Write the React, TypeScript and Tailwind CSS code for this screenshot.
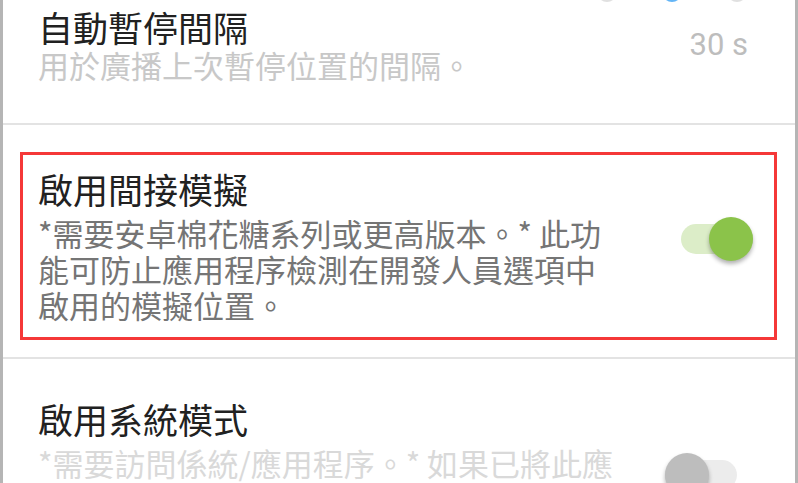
import React from "react";

const cjk = { fontFamily: '"Noto Sans CJK TC", "Noto Sans CJK SC", sans-serif' };
const latin = { fontFamily: 'Roboto, "Noto Sans CJK TC", sans-serif' };

function Toggle({ on }: { on: boolean }) {
  return (
    <div className="relative w-[72px] h-[44px] flex items-center">
      <div
        className={
          "w-[72px] h-[30px] rounded-full " + (on ? "bg-[#dcedc8]" : "bg-[#ececec]")
        }
      />
      <div
        className={
          "absolute top-0 w-[44px] h-[44px] rounded-full shadow-[0_3px_4px_rgba(0,0,0,0.3)] " +
          (on ? "right-0 bg-[#8bc34a]" : "left-0 bg-[#bdbdbd]")
        }
      />
    </div>
  );
}

function Divider() {
  return <div className="h-[2px] bg-[#e3e3e3]" />;
}

export default function App() {
  return (
    <div className="relative w-[798px] h-[483px] overflow-hidden bg-white border-x-[3px] border-[#b5b5b5]">
      {/* dots from the row above, cut off at the top edge */}
      <div className="absolute top-[-18px] left-[594px] w-[20px] h-[20px] rounded-full bg-[#e0e0e0]" />
      <div className="absolute top-[-18px] left-[659px] w-[20px] h-[20px] rounded-full bg-[#64b5f6]" />
      <div className="absolute top-[-18px] left-[724px] w-[20px] h-[20px] rounded-full bg-[#e0e0e0]" />

      <div className="flex items-center justify-between pl-[35px] pr-[47px] h-[123px] pb-[34px]">
        <div style={cjk}>
          <div className="text-[35px] leading-[40px] text-[#212121]">自動暫停間隔</div>
          <div className="text-[31px] leading-[36px] text-[#c8c8c8]">用於廣播上次暫停位置的間隔。</div>
        </div>
        <div style={latin} className="text-[31px] text-[#bdbdbd] mt-[2px]">
          30 s
        </div>
      </div>
      <Divider />

      <div className="pt-[27px] pb-[17px] pl-[17px] pr-[18px]">
        <div className="border-[3px] border-[#f53838] h-[188px] pl-[15px] pr-[21px] pt-[14px] flex items-start justify-between">
          <div style={cjk}>
            <div className="text-[35px] leading-[40px] text-[#212121]">啟用間接模擬</div>
            <div className="text-[31px] leading-[36px] text-[#757575] mt-[6px]">
              <div>*需要安卓棉花糖系列或更高版本。* 此功</div>
              <div>能可防止應用程序檢測在開發人員選項中</div>
              <div>啟用的模擬位置。</div>
            </div>
          </div>
          <div className="mt-[48px]">
            <Toggle on />
          </div>
        </div>
      </div>
      <Divider />

      <div className="flex items-start justify-between pl-[35px] pr-[58px] pt-[40px]">
        <div style={cjk}>
          <div className="text-[35px] leading-[40px] text-[#212121]">啟用系統模式</div>
          <div className="text-[31px] leading-[36px] text-[#d9d9d9] mt-[6px]">
            *需要訪問係統/應用程序。* 如果已將此應
          </div>
        </div>
        <div className="mt-[54px]">
          <Toggle on={false} />
        </div>
      </div>
    </div>
  );
}
